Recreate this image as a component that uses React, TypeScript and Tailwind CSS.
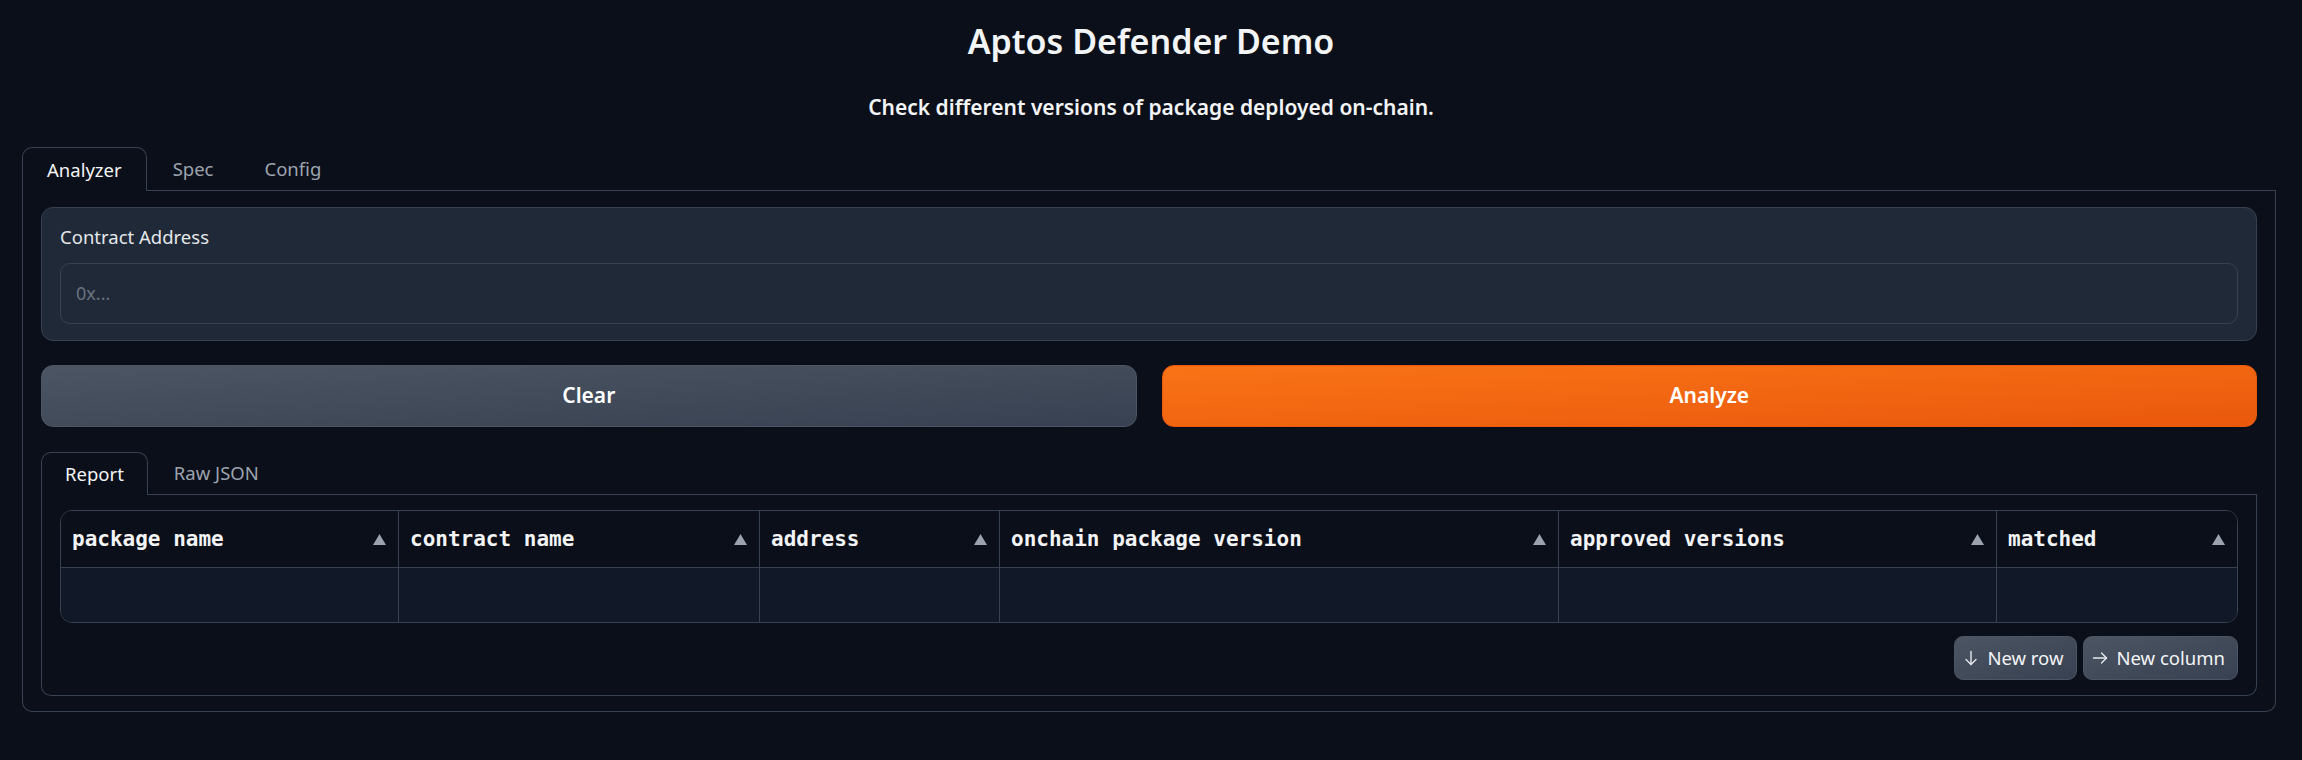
import React from "react";

const cols = [
  { name: "package name", w: "w-[338px]" },
  { name: "contract name", w: "w-[361px]" },
  { name: "address", w: "w-[240px]" },
  { name: "onchain package version", w: "w-[559px]" },
  { name: "approved versions", w: "w-[438px]" },
  { name: "matched", w: "flex-1" },
];

function SortIcon() {
  return (
    <svg width="13" height="11" viewBox="0 0 13 11" className="shrink-0">
      <polygon points="6.5,0 13,11 0,11" fill="#9ca3af" />
    </svg>
  );
}

function ArrowDown() {
  return (
    <svg width="14" height="16" viewBox="0 0 14 16" fill="none" stroke="#e5e7eb" strokeWidth="1.4" strokeLinecap="round" strokeLinejoin="round">
      <path d="M7 1.5V14.5" />
      <path d="M2 9.5L7 14.5L12 9.5" />
    </svg>
  );
}

function ArrowRight() {
  return (
    <svg width="16" height="14" viewBox="0 0 16 14" fill="none" stroke="#e5e7eb" strokeWidth="1.4" strokeLinecap="round" strokeLinejoin="round">
      <path d="M1.5 7H14.5" />
      <path d="M9.5 2L14.5 7L9.5 12" />
    </svg>
  );
}

export default function App() {
  const font = { fontFamily: '"Noto Sans", "Open Sans", sans-serif' };
  return (
    <div
      className="min-h-[760px] w-full bg-[#0b0f19] text-[#f3f4f6]"
      style={font}
    >
      <div className="flex flex-col items-center">
        <h1 className="pt-[21px] text-[34px] leading-[40px] font-semibold text-[#f3f4f6]">
          Aptos Defender Demo
        </h1>
        <h3 className="mt-[32px] text-[21px] leading-[28px] font-semibold text-[#f3f4f6]">
          Check different versions of package deployed on-chain.
        </h3>
      </div>

      <div className="ml-[22px] mr-[26px] mt-[26px]">
        {/* outer tabs */}
        <div className="flex h-[44px] border-b border-[#374151]">
          <div className="-mb-px flex h-[44px] items-center rounded-t-[10px] border border-b-0 border-[#374151] bg-[#0b0f19] px-[24px] text-[18.5px] text-[#f3f4f6]">
            Analyzer
          </div>
          <div className="flex items-center px-[26px] text-[18.5px] text-[#9ca3af]">Spec</div>
          <div className="flex items-center px-[25px] text-[18.5px] text-[#9ca3af]">Config</div>
        </div>

        <div className="rounded-b-[10px] border border-t-0 border-[#374151] px-[18px] pt-[16px] pb-[15px]">
          {/* contract address block */}
          <div className="rounded-[12px] border border-[#374151] bg-[#1f2937] px-[18px] pt-[17px] pb-[16px]">
            <div className="text-[18.5px] leading-[24px] text-[#e5e7eb]">Contract Address</div>
            <div className="mt-[14px] flex h-[61px] items-center rounded-[10px] border border-[#374151] bg-[#1f2937] px-[15px] text-[18px] text-[#6b7280]">
              0x...
            </div>
          </div>

          {/* buttons */}
          <div className="mt-[24px] flex gap-[25px]">
            <button className="flex h-[62px] flex-1 items-center justify-center rounded-[12px] border border-[#4b5563] bg-linear-to-br from-[#4b5563] to-[#374151] text-[21px] font-semibold text-white">
              Clear
            </button>
            <button className="flex h-[62px] flex-1 items-center justify-center rounded-[12px] border border-[#ea580c] bg-linear-to-br from-[#f97316] to-[#ea580c] text-[21px] font-semibold text-white">
              Analyze
            </button>
          </div>

          {/* report tabs */}
          <div className="mt-[25px]">
            <div className="flex h-[43px] border-b border-[#374151]">
              <div className="-mb-px flex h-[43px] items-center rounded-t-[10px] border border-b-0 border-[#374151] bg-[#0b0f19] px-[23px] text-[18.5px] text-[#f3f4f6]">
                Report
              </div>
              <div className="flex items-center px-[26px] text-[18.5px] text-[#9ca3af]">Raw JSON</div>
            </div>
            <div className="rounded-b-[10px] border border-t-0 border-[#374151] px-[18px] pt-[15px] pb-[15px]">
              <div className="overflow-hidden rounded-[12px] border border-[#374151]">
                <div className="flex h-[56px] bg-[#0b0f19]">
                  {cols.map((c, i) => (
                    <div
                      key={c.name}
                      className={`${c.w} flex items-center justify-between pl-[11px] pr-[12px] ${i < cols.length - 1 ? "border-r border-[#374151]" : ""}`}
                    >
                      <span
                        className="pt-[2px] text-[21px] font-bold text-[#f3f4f6]"
                        style={{ fontFamily: '"DejaVu Sans Mono", "Liberation Mono", monospace' }}
                      >
                        {c.name}
                      </span>
                      <SortIcon />
                    </div>
                  ))}
                </div>
                <div className="flex h-[55px] border-t border-[#374151] bg-[#111827]">
                  {cols.map((c, i) => (
                    <div
                      key={c.name}
                      className={`${c.w} ${i < cols.length - 1 ? "border-r border-[#374151]" : ""}`}
                    />
                  ))}
                </div>
              </div>
              <div className="mt-[13px] flex justify-end gap-[6px]">
                <button className="flex h-[44px] items-center gap-[9px] rounded-[9px] border border-[#4b5563] bg-linear-to-br from-[#4b5563] to-[#374151] pl-[9px] pr-[12px] text-[18.5px] text-[#f3f4f6]">
                  <ArrowDown />
                  New row
                </button>
                <button className="flex h-[44px] items-center gap-[9px] rounded-[9px] border border-[#4b5563] bg-linear-to-br from-[#4b5563] to-[#374151] pl-[8px] pr-[12px] text-[18.5px] text-[#f3f4f6]">
                  <ArrowRight />
                  New column
                </button>
              </div>
            </div>
          </div>
        </div>
      </div>
    </div>
  );
}
